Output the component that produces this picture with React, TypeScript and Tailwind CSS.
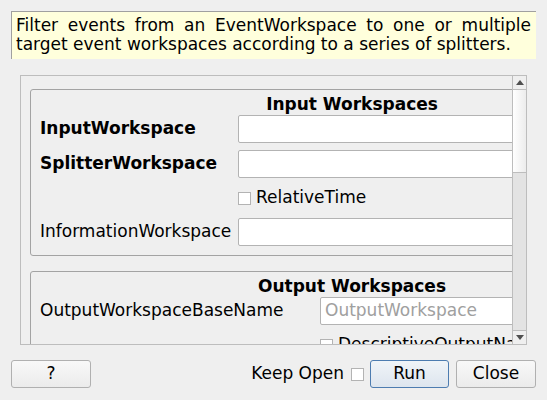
import React from 'react'

function Field({ placeholder }: { placeholder?: string }) {
  return (
    <div className="h-[28px] bg-white border border-[#b3b3b3] rounded-[2px] pl-[4px] flex items-center text-[#a0a0a0]">
      {placeholder}
    </div>
  )
}

function CheckBox({ label }: { label: string }) {
  return (
    <div className="h-[26px] flex items-center gap-[5px]">
      <span className="w-[13px] h-[13px] bg-white border border-[#b3b3b3] shrink-0" />
      <span className="whitespace-nowrap">{label}</span>
    </div>
  )
}

function Arrow({ up }: { up?: boolean }) {
  return (
    <svg width="8" height="5" viewBox="0 0 8 5">
      <path d={up ? 'M0 5 L4 0 L8 5 Z' : 'M0 0 L4 5 L8 0 Z'} fill="#4f4f4f" />
    </svg>
  )
}

export default function App() {
  return (
    <div className="w-[547px] h-[400px] bg-[#efefef] flex flex-col overflow-hidden text-black text-[17px] font-['DejaVu_Sans',sans-serif]">
      {/* Description */}
      <div className="mx-[11px] mt-[11px] h-[48px] bg-[#ffffdc] border-t border-l border-[#a0a0a0] pl-[4px] pr-[5px] pt-[4px] leading-[19px] text-justify">
        Filter events from an EventWorkspace to one or multiple target event workspaces according to a series of splitters.
      </div>

      {/* Scroll area */}
      <div className="ml-[20px] mt-[16px] w-[507px] h-[270px] border border-[#bdbdbd] flex">
        <div className="flex-1 overflow-hidden pl-[9px] pt-[13px]">
          <div className="w-[644px] border border-[#a3a3a3] rounded-[3px] px-[9px] pb-[9px]">
            <div className="h-[25px] pt-[3px] text-center font-bold leading-[22px]">Input Workspaces</div>
            <div className="grid grid-cols-[198px_1fr] gap-y-[7px] items-center">
              <span className="font-bold">InputWorkspace</span>
              <Field />
              <span className="font-bold">SplitterWorkspace</span>
              <Field />
              <span />
              <CheckBox label="RelativeTime" />
              <span className="whitespace-nowrap">InformationWorkspace</span>
              <Field />
            </div>
          </div>

          <div className="w-[644px] mt-[15px] border border-[#a3a3a3] rounded-[3px] px-[9px] pb-[9px]">
            <div className="h-[25px] pt-[3px] text-center font-bold leading-[22px]">Output Workspaces</div>
            <div className="grid grid-cols-[280px_1fr] gap-y-[7px] items-center">
              <span className="whitespace-nowrap">OutputWorkspaceBaseName</span>
              <Field placeholder="OutputWorkspace" />
              <span />
              <CheckBox label="DescriptiveOutputNames" />
            </div>
          </div>
        </div>

        {/* Scrollbar */}
        <div className="w-[14px] border-l border-[#bdbdbd] bg-[#e3e3e3] flex flex-col">
          <div className="h-[14px] bg-[#efefef] border-b border-[#bdbdbd] flex items-center justify-center">
            <Arrow up />
          </div>
          <div className="h-[83px] bg-gradient-to-r from-white to-[#ececec] border-b border-[#bdbdbd]" />
          <div className="flex-1" />
          <div className="h-[14px] bg-[#efefef] border-t border-[#bdbdbd] flex items-center justify-center">
            <Arrow />
          </div>
        </div>
      </div>

      {/* Buttons */}
      <div className="mt-[15px] px-[11px] flex items-center">
        <button className="w-[80px] h-[28px] border border-[#b0b0b0] rounded-[3px] bg-gradient-to-b from-[#f8f8f8] to-[#ebebeb]">?</button>
        <div className="flex-1" />
        <span>Keep Open</span>
        <span className="ml-[7px] w-[13px] h-[13px] bg-white border border-[#b3b3b3]" />
        <button className="ml-[6px] w-[79px] h-[28px] border border-[#4d7cb0] rounded-[3px] bg-gradient-to-b from-[#f0f4f8] to-[#dde5ee]">Run</button>
        <button className="ml-[7px] w-[80px] h-[28px] border border-[#b0b0b0] rounded-[3px] bg-gradient-to-b from-[#f8f8f8] to-[#ebebeb]">Close</button>
      </div>
    </div>
  )
}
